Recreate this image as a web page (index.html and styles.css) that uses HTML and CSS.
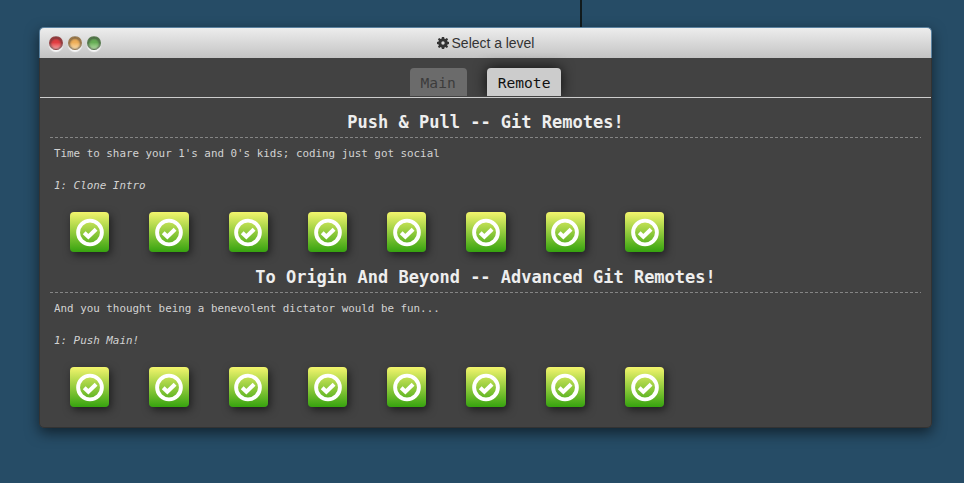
FILE: index.html
```
<!DOCTYPE html>
<html lang="en">
<head>
<meta charset="utf-8">
<title>Select a level</title>
<link rel="stylesheet" href="styles.css">
</head>
<body>
<svg class="defs" width="0" height="0" aria-hidden="true">
  <symbol id="check" viewBox="0 0 30 30">
    <circle cx="15" cy="15" r="12.3" fill="none" stroke="#fff" stroke-width="4"/>
    <path d="M9 15.2L13.3 19.3L21.3 11.6" fill="none" stroke="#fff" stroke-width="4.2"/>
  </symbol>
</svg>
<div class="graph-line"></div>
<main class="window">
  <header class="titlebar">
    <div class="lights"><i class="light red"></i><i class="light amber"></i><i class="light green"></i></div>
    <svg class="gear" viewBox="0 0 12 12"><path fill="#333" fill-rule="evenodd" d="M4.9 0h2.2l.4 1.7.8.3L9.8 1l1.3 1.3-1 1.5.3.8 1.6.3v2.2l-1.6.4-.3.8 1 1.5-1.3 1.3-1.5-1-.8.3L7.1 12H4.9l-.4-1.6-.8-.3-1.5 1L.9 9.8l1-1.5-.3-.8L0 7.1V4.9l1.6-.3.3-.8-1-1.5L2.2 1l1.5 1 .8-.3zM6 4.3a1.7 1.7 0 1 0 0 3.4 1.7 1.7 0 0 0 0-3.4z"/></svg>
    <span>Select a level</span>
  </header>
  <div class="content">
    <nav class="tabs"><div class="tab">Main</div><div class="tab active">Remote</div></nav>
    <section class="series">
      <h2>Push &amp; Pull -- Git Remotes!</h2>
      <p>Time to share your 1's and 0's kids; coding just got social</p>
      <p class="current">1: Clone Intro</p>
      <div class="levels">
        <a><svg><use href="#check"/></svg></a><a><svg><use href="#check"/></svg></a><a><svg><use href="#check"/></svg></a><a><svg><use href="#check"/></svg></a><a><svg><use href="#check"/></svg></a><a><svg><use href="#check"/></svg></a><a><svg><use href="#check"/></svg></a><a><svg><use href="#check"/></svg></a>
      </div>
    </section>
    <section class="series">
      <h2>To Origin And Beyond -- Advanced Git Remotes!</h2>
      <p>And you thought being a benevolent dictator would be fun...</p>
      <p class="current">1: Push Main!</p>
      <div class="levels">
        <a><svg><use href="#check"/></svg></a><a><svg><use href="#check"/></svg></a><a><svg><use href="#check"/></svg></a><a><svg><use href="#check"/></svg></a><a><svg><use href="#check"/></svg></a><a><svg><use href="#check"/></svg></a><a><svg><use href="#check"/></svg></a><a><svg><use href="#check"/></svg></a>
      </div>
    </section>
  </div>
</main>
</body>
</html>
```
FILE: styles.css
```
* { box-sizing: border-box; }
body {
  margin: 0;
  height: 483px;
  padding: 27px 32px 0 39px;
  overflow: hidden;
  background: #264c66;
  font-family: "DejaVu Sans Mono", monospace;
}
.defs, .graph-line { position: absolute; }
.graph-line { left: 580px; top: 0; width: 2px; height: 27px; background: #111a1c; }
.window {
  position: relative;
  width: 893px;
  height: 401px;
  border-radius: 5px;
  box-shadow: 0 5px 14px rgba(0, 0, 0, .55);
}
.titlebar {
  position: relative;
  display: flex;
  align-items: center;
  justify-content: center;
  gap: 3px;
  height: 31px;
  border: 1px solid #5b82a0;
  border-bottom: 0;
  border-radius: 5px 5px 0 0;
  background: linear-gradient(#ededed, #c3c3c3);
  font: 14px/30px "Liberation Sans", Arial, sans-serif;
  letter-spacing: -.03px;
  color: #333;
}
.gear { width: 12px; height: 12px; }
.lights { position: absolute; left: 9px; top: 8px; display: flex; gap: 5px; }
.light {
  width: 14px;
  height: 14px;
  border: 1px solid rgba(70, 70, 70, .5);
  border-radius: 50%;
  box-shadow: 0 2px 1px #f6f6f6, inset 0 1px 2px 1px rgba(60, 60, 60, .6);
}
.red { background: linear-gradient(#e23c40 45%, #f8a0a0); }
.amber { background: linear-gradient(#eeae58 45%, #fbdfae); }
.green { background: linear-gradient(#66ad55 45%, #b5dfa5); }
.content {
  height: 370px;
  border: 1px solid #333;
  border-top: 0;
  border-radius: 0 0 5px 5px;
  background: #424242;
}
.tabs {
  display: flex;
  justify-content: center;
  gap: 20px;
  height: 40px;
  padding: 10px 0 1px;
  border-bottom: 1px solid #ccc;
}
.tab {
  height: 28px;
  padding: 0 11px;
  border-radius: 4px 4px 0 0;
  background: #6b6b6b;
  color: #3c3c3c;
  font-size: 14.6px;
  line-height: 30px;
}
.active { background: #ccc; color: #111; box-shadow: 0 0 14px rgba(0, 0, 0, .8); clip-path: inset(-15px -15px 0 -15px); }
.series { height: 155px; padding: 10px 10px 0; }
h2 {
  height: 30px;
  margin: 0;
  color: #eee;
  font-size: 17px;
  line-height: 29px;
  text-align: center;
  background: repeating-linear-gradient(90deg, #858585 0 3px, transparent 3px 5px) bottom / 100% 1px no-repeat;
}
p { margin: 0; padding-left: 4px; color: #d2d2d2; font-size: 10.87px; line-height: 32px; }
.current { font-style: italic; }
.levels { display: flex; gap: 40px; padding: 10px 20px 0; }
.levels a {
  display: flex;
  flex: none;
  align-items: center;
  justify-content: center;
  width: 39.3px;
  height: 40px;
  border-radius: 4px;
  background: linear-gradient(#f3f56d, #36a30f);
  box-shadow: 2px 3px 9px rgba(0, 0, 0, .55);
}
.levels svg { width: 30px; height: 29px; }
```
